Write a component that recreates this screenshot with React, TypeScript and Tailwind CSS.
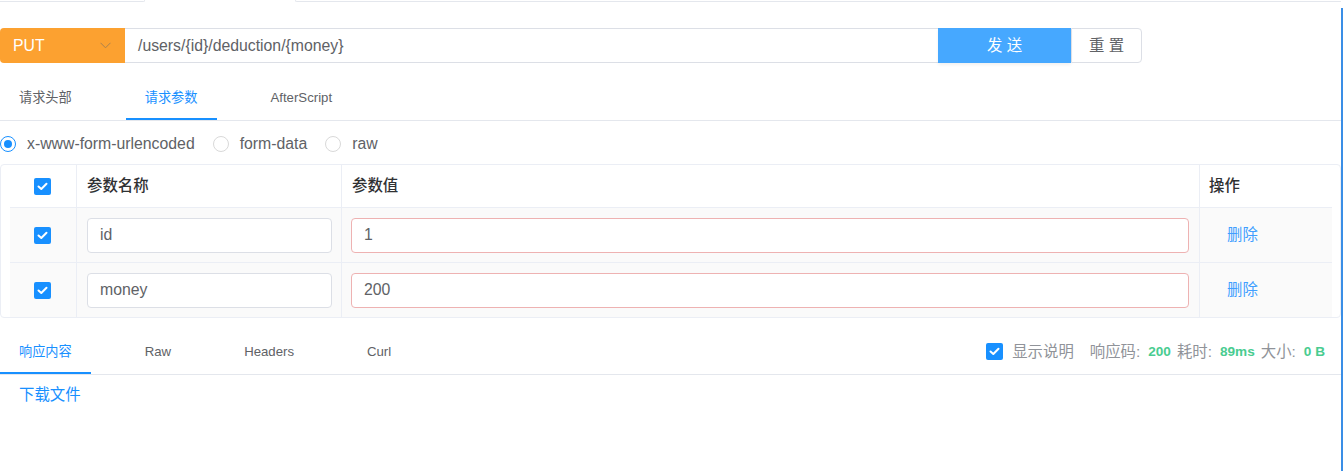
import { useState } from "react";

const font = "font-['Liberation_Sans','Noto_Sans_CJK_SC',sans-serif]";

function Check({ size = 17 }: { size?: number }) {
  return (
    <span
      className="flex shrink-0 items-center justify-center rounded-[2px] bg-[#1890ff]"
      style={{ width: size, height: size }}
    >
      <svg width="11" height="9" viewBox="0 0 11 9" fill="none">
        <polyline points="1.5,4.5 4.3,7 9.5,1.8" stroke="white" strokeWidth="2" strokeLinecap="round" strokeLinejoin="round" />
      </svg>
    </span>
  );
}

function Radio({ checked, label }: { checked?: boolean; label: string }) {
  return (
    <label className="flex items-center gap-[11px]">
      <span
        className={`flex h-[16px] w-[16px] items-center justify-center rounded-full border ${
          checked ? "border-[#1890ff]" : "border-[#d9d9d9]"
        }`}
      >
        {checked && <span className="h-[8px] w-[8px] rounded-full bg-[#1890ff]" />}
      </span>
      <span className="text-[15.8px] leading-[22px] text-[#606266]">{label}</span>
    </label>
  );
}

function Tabs({ items, active }: { items: string[]; active: number }) {
  return (
    <div className="flex gap-[35px]">
      {items.map((t, i) => (
        <div
          key={t}
          className={`flex h-[44px] items-center px-[19px] pt-[2px] text-[13.2px] ${
            i === active ? "border-b-2 border-[#1890ff] text-[#1890ff]" : "border-b-2 border-transparent text-[#606266]"
          }`}
        >
          {t}
        </div>
      ))}
    </div>
  );
}

const rows = [
  { name: "id", value: "1" },
  { name: "money", value: "200" },
];

export default function App() {
  const [url] = useState("/users/{id}/deduction/{money}");

  return (
    <div className={`flex h-[471px] w-[1343px] overflow-hidden bg-white ${font}`}>
      <div className="w-[1341px] shrink-0">
        {/* top card tab edge */}
        <div className="flex h-[2px]">
          <div className="w-[145px] rounded-br-[3px] border-r border-b border-[#e4e7ed]" />
          <div className="w-[150px]" />
          <div className="flex-1 rounded-bl-[3px] border-b border-l border-[#e4e7ed]" />
        </div>

        {/* request line */}
        <div className="mt-[26px] flex h-[35px]">
          <div className="flex w-[125px] items-center justify-between rounded-l-[4px] bg-[#fca130] pr-[14px] pl-[13px] text-[15.8px] text-white">
            <span>PUT</span>
            <svg width="11" height="7" viewBox="0 0 11 7" fill="none">
              <polyline points="0.5,0.8 5.5,5.8 10.5,0.8" stroke="#a98250" strokeWidth="1" />
            </svg>
          </div>
          <div className="flex w-[813px] items-center border-y border-[#dcdfe6] px-[13px] text-[15.8px] text-[#606266]">
            {url}
          </div>
          <button className="flex w-[133px] items-center justify-center bg-[#46a8ff] text-[15.4px] text-white shadow-[0_2px_3px_rgba(0,0,0,0.06)]">
            发 送
          </button>
          <button className="flex w-[71px] items-center justify-center rounded-r-[4px] border border-[#dcdfe6] text-[15.4px] text-[#606266]">
            重 置
          </button>
        </div>

        {/* request tabs */}
        <div className="mt-[13px] border-b border-[#e4e7ed]">
          <Tabs items={["请求头部", "请求参数", "AfterScript"]} active={1} />
        </div>

        {/* body type */}
        <div className="mt-[12px] flex h-[22px] items-center gap-[18px]">
          <Radio checked label="x-www-form-urlencoded" />
          <Radio label="form-data" />
          <Radio label="raw" />
        </div>

        {/* params table */}
        <div className="mt-[9px] rounded-[4px] border border-[#ebeef5]">
          <div className="grid h-[42px] grid-cols-[76px_265px_858px_1fr] text-[15.4px] font-medium text-[#303133]">
            <div className="flex items-center border-r border-[#ebeef5] pl-[33px]">
              <Check />
            </div>
            <div className="flex items-center border-r border-[#ebeef5] pl-[10px]">参数名称</div>
            <div className="flex items-center border-r border-[#ebeef5] pl-[10px]">参数值</div>
            <div className="flex items-center pl-[9px]">操作</div>
          </div>
          {rows.map((r) => (
            <div
              key={r.name}
              className="mr-[8px] ml-[9px] grid h-[55px] grid-cols-[67px_265px_858px_1fr] border-t border-[#ebeef5] bg-[#fafafa] text-[15.4px]"
            >
              <div className="flex items-center border-r border-[#ebeef5] pl-[24px]">
                <Check />
              </div>
              <div className="flex items-center border-r border-[#ebeef5]">
                <div className="ml-[10px] flex h-[35px] w-[245px] items-center rounded-[4px] border border-[#dcdfe6] bg-white px-[12px] text-[15.8px] text-[#606266]">
                  {r.name}
                </div>
              </div>
              <div className="flex items-center border-r border-[#ebeef5]">
                <div className="ml-[9px] flex h-[35px] w-[838px] items-center rounded-[4px] border border-[#eeb2b2] bg-white px-[12px] text-[15.8px] text-[#606266]">
                  {r.value}
                </div>
              </div>
              <div className="flex items-center pl-[27px] text-[#409eff]">删除</div>
            </div>
          ))}
        </div>

        {/* response tabs */}
        <div className="mt-[12px] flex items-center border-b border-[#e4e7ed]">
          <Tabs items={["响应内容", "Raw", "Headers", "Curl"]} active={0} />
          <div className="ml-auto flex items-center pr-[16px] text-[15.4px] text-[#909399]">
            <Check />
            <span className="ml-[9px]">显示说明</span>
            <span className="ml-[16px]">响应码:</span>
            <span className="ml-[8px] text-[13.6px] font-bold text-[#49cc90]">200</span>
            <span className="ml-[6px]">耗时:</span>
            <span className="ml-[8px] text-[13.6px] font-bold text-[#49cc90]">89ms</span>
            <span className="ml-[6px]">大小:</span>
            <span className="ml-[8px] text-[13.6px] font-bold text-[#49cc90]">0 B</span>
          </div>
        </div>

        <div className="mt-[9px] pl-[19px] text-[15.4px] leading-[22px] text-[#1890ff]">下载文件</div>
      </div>
      <div className="mt-[8px] w-[2px] shrink-0 bg-[#3a8ee6]" />
    </div>
  );
}
